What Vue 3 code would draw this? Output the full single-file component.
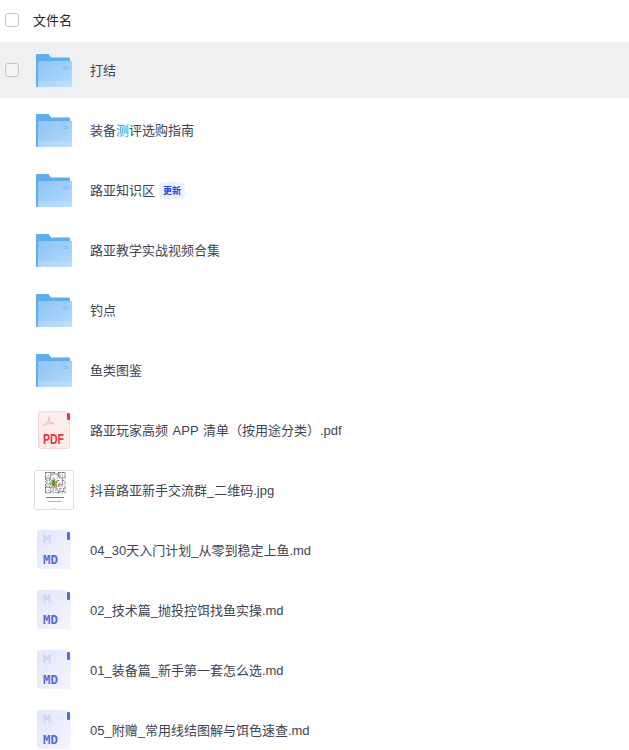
<template>
  <div class="file-list">
    <div class="list-head">
      <span class="checkbox"></span>
      <span class="head-name">文件名</span>
    </div>

    <div
      v-for="(file, i) in files"
      :key="file.name"
      class="file-row"
      :class="{ hover: i === 0 }"
    >
      <span class="checkbox" :class="{ hidden: i !== 0 }"></span>

      <div class="file-icon">
        <svg v-if="file.type === 'folder'" viewBox="0 0 36 33" width="36" height="33">
          <defs>
            <linearGradient :id="`front-${i}`" x1="0" y1="0" x2="1" y2="1">
              <stop offset="0" stop-color="#8cc4f4" />
              <stop offset="1" stop-color="#b6dafd" />
            </linearGradient>
          </defs>
          <path fill="#5eaeee" d="M0 1a1 1 0 0 1 1-1h11.500l2.500 3.500h18a1 1 0 0 1 1 1V33H1a1 1 0 0 1-1-1z" />
          <rect x="2" y="7" width="34" height="26" :style="{ fill: `url(#front-${i})` }" />
          <rect x="2" y="27" width="34" height="6" fill="#fff" opacity="0.14" />
          <rect x="27" y="12" width="5" height="1" fill="#7cbcf2" />
          <rect x="27" y="14" width="5" height="1" fill="#7cbcf2" />
        </svg>

        <svg v-else-if="file.type === 'pdf'" viewBox="0 0 32 38" width="32" height="38">
          <path fill="#fcecec" stroke="#f6d5d6" d="M3 .5h25l3.500 4V35a2.500 2.500 0 0 1-2.500 2.500H3A2.500 2.500 0 0 1 .5 35V3A2.500 2.500 0 0 1 3 .5z" />
          <rect x="29" y="2" width="3" height="7" rx="1" fill="#e8353e" />
          <path fill="none" stroke="#f5c3c4" stroke-width="1.300" d="M5 14.500c3.500-1.500 5.500-4 6.500-7 .4-1.300-1-1.500-1-.3 0 2.500 2.500 5.300 5 5.800 1 .2 1-1-.3-1-2.500-.2-6.500 1-10.200 2.500z" />
          <text x="15.500" y="33" class="pdf-label" textLength="21" lengthAdjust="spacingAndGlyphs">PDF</text>
        </svg>

        <svg v-else-if="file.type === 'image'" viewBox="0 0 40 40" width="40" height="40">
          <rect x="0.500" y="0.500" width="39" height="39" rx="1.500" fill="#fff" stroke="#dfe0e5" />
          <g fill="#3a3c42" opacity="0.8">
            <rect v-for="cell in qrCells" :key="cell.key" :x="cell.x" :y="cell.y" width="1" height="1" />
          </g>
          <rect x="18" y="10" width="3" height="6" fill="#5d9a4a" />
          <rect x="21" y="11" width="2" height="5" fill="#d8963a" />
          <rect x="18" y="16" width="5" height="2" fill="#c9b27a" />
          <rect x="12" y="27" width="18" height="1" fill="#77797f" />
          <rect x="14" y="31" width="14" height="1" fill="#b4b6bb" />
          <rect x="18" y="38" width="4" height="1" fill="#e4e5e8" />
        </svg>

        <svg v-else class="md-icon" viewBox="0 0 34 39" width="34" height="39">
          <defs>
            <linearGradient :id="`md-${i}`" x1="0" y1="0" x2="1" y2="1">
              <stop offset="0" stop-color="#e2e6fb" />
              <stop offset="1" stop-color="#f4f5fe" />
            </linearGradient>
          </defs>
          <path :style="{ fill: `url(#md-${i})` }" d="M3 0h26l5 5v31a3 3 0 0 1-3 3H3a3 3 0 0 1-3-3V3a3 3 0 0 1 3-3z" />
          <rect x="30" y="2" width="3" height="8" rx="1" fill="#5a68d6" />
          <text x="6" y="13" class="md-small" textLength="8" lengthAdjust="spacingAndGlyphs">M</text>
          <text x="6" y="34" class="md-label" textLength="15" lengthAdjust="spacingAndGlyphs">MD</text>
        </svg>
      </div>

      <span class="file-name">
        <template v-for="part in file.parts" :key="part.text">
          <em v-if="part.mark">{{ part.text }}</em>
          <template v-else>{{ part.text }}</template>
        </template>
      </span>
      <span v-if="file.tag" class="tag">{{ file.tag }}</span>
    </div>
  </div>
</template>

<script setup>
const rawFiles = [
  { type: 'folder', name: '打结' },
  { type: 'folder', name: '装备|测|评选购指南' },
  { type: 'folder', name: '路亚知识区', tag: '更新' },
  { type: 'folder', name: '路亚教学实战视频合集' },
  { type: 'folder', name: '钓点' },
  { type: 'folder', name: '鱼类图鉴' },
  { type: 'pdf', name: '路亚玩家高频 APP 清单（按用途分类）.pdf' },
  { type: 'image', name: '抖音路亚新手交流群_二维码.jpg' },
  { type: 'md', name: '04_30天入门计划_从零到稳定上鱼.md' },
  { type: 'md', name: '02_技术篇_抛投控饵找鱼实操.md' },
  { type: 'md', name: '01_装备篇_新手第一套怎么选.md' },
  { type: 'md', name: '05_附赠_常用线结图解与饵色速查.md' }
]

// 中间一段用 | 隔开的是搜索高亮
const files = rawFiles.map((f) => ({
  ...f,
  parts: f.name.split('|').map((text, idx) => ({ text, mark: idx === 1 }))
}))

// 二维码缩略图，点阵是假的，看着像就行
const qrCells = []
const SIZE = 16
const inFinder = (r, c) => c < 5 && r < 5
const finderOn = (r, c) => r === 0 || r === 4 || c === 0 || c === 4 || (r === 2 && c === 2)
for (let row = 0; row < SIZE; row++) {
  for (let col = 0; col < SIZE; col++) {
    const flipCol = SIZE - 1 - col
    const flipRow = SIZE - 1 - row
    let on
    if (inFinder(row, col)) on = finderOn(row, col)
    else if (inFinder(row, flipCol)) on = finderOn(row, flipCol)
    else if (inFinder(flipRow, col)) on = finderOn(flipRow, col)
    else on = Math.abs(Math.sin(row * 12.9898 + col * 78.233) * 43758.5453) % 1 < 0.5
    if (on) qrCells.push({ key: `${row}-${col}`, x: 11 + col * 1.3, y: 2 + row * 1.35 })
  }
}
</script>

<style scoped>
.file-list {
  display: flex;
  flex-direction: column;
  gap: 4px;
  width: 629px;
  height: 750px;
  overflow: hidden;
  background: #fff;
  font-family: "Liberation Sans", "Noto Sans CJK SC", sans-serif;
  font-size: 13px;
  color: #3e4452;
}

.list-head {
  display: flex;
  flex-shrink: 0;
  align-items: center;
  height: 38px;
  margin-top: 1px;
  margin-bottom: -1px;
  padding-left: 5px;
}

.head-name {
  margin-left: 14px;
  padding-bottom: 2px;
  color: #25262b;
}

.checkbox {
  flex-shrink: 0;
  box-sizing: border-box;
  width: 14px;
  height: 14px;
  border: 1px solid #c4c4c8;
  border-radius: 3px;
  background: #fff;
}

.checkbox.hidden {
  visibility: hidden;
}

.file-row {
  display: flex;
  flex-shrink: 0;
  align-items: center;
  height: 56px;
  padding-left: 5px;
}

.file-row.hover {
  background: #eff0f2;
}

.file-row.hover .checkbox {
  background: #f4f4f6;
}

.file-icon {
  display: flex;
  align-items: center;
  justify-content: center;
  flex-shrink: 0;
  width: 40px;
  margin-left: 15px;
}

.md-icon {
  margin-top: -1px;
}

.file-name {
  margin-left: 16px;
  padding-bottom: 2px;
  word-spacing: 1px;
}

.file-name em {
  font-style: normal;
  color: #2f8fe8;
}

.tag {
  display: flex;
  align-items: center;
  justify-content: center;
  box-sizing: border-box;
  width: 26px;
  height: 17px;
  margin-left: 4px;
  border-radius: 5px;
  background: #eef1fe;
  color: #1d45f0;
  font-size: 9px;
  font-weight: 700;
}

.pdf-label {
  font-family: "Liberation Sans", sans-serif;
  font-size: 14px;
  font-weight: 700;
  fill: #e8353e;
  text-anchor: middle;
}

.md-small {
  font-family: "DejaVu Sans Mono", monospace;
  font-size: 10px;
  font-weight: 700;
  fill: #ccd2f4;
}

.md-label {
  font-family: "DejaVu Sans Mono", monospace;
  font-size: 13px;
  font-weight: 700;
  fill: #5a68d6;
}
</style>
